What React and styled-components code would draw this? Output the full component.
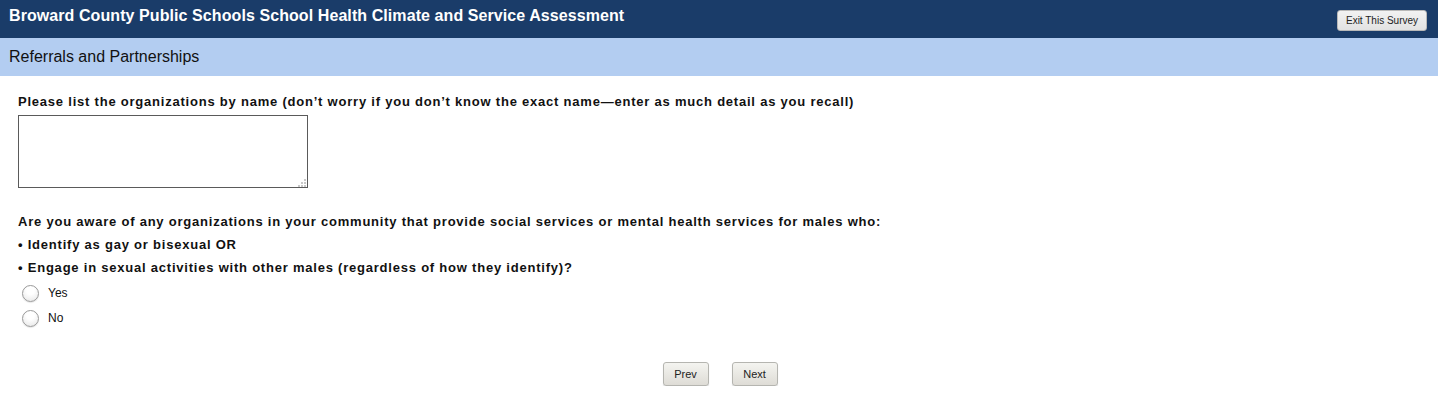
import React from 'react'
import styled, { createGlobalStyle } from 'styled-components'

const Global = createGlobalStyle`
  body {
    margin: 0;
    background: #fff;
    font-family: "Liberation Sans", Arial, sans-serif;
  }
`;

const App = () => {
  return (
    <Page>
      <Global />
      <Header>
        <Title>Broward County Public Schools School Health Climate and Service Assessment</Title>
        <ExitButton>Exit This Survey</ExitButton>
      </Header>
      <SubHeader>Referrals and Partnerships</SubHeader>
      <Body>
        <Question>
          <QText>Please list the organizations by name (don’t worry if you don’t know the exact name—enter as much detail as you recall)</QText>
          <BoxWrap>
            <TextBox />
            <Grip>
              <svg width="9" height="9" viewBox="0 0 9 9">
                <rect x="7" y="1" width="2" height="2" fill="#c9c9c9" />
                <rect x="4" y="4" width="2" height="2" fill="#c9c9c9" />
                <rect x="7" y="4" width="2" height="2" fill="#c9c9c9" />
                <rect x="1" y="7" width="2" height="2" fill="#c9c9c9" />
                <rect x="4" y="7" width="2" height="2" fill="#c9c9c9" />
                <rect x="7" y="7" width="2" height="2" fill="#c9c9c9" />
              </svg>
            </Grip>
          </BoxWrap>
        </Question>
        <Question>
          <QText>
            Are you aware of any organizations in your community that provide social services or mental health services for males who:<br />
            • Identify as gay or bisexual OR<br />
            • Engage in sexual activities with other males (regardless of how they identify)?
          </QText>
          <Options>
            <Option>
              <Radio />
              Yes
            </Option>
            <Option>
              <Radio />
              No
            </Option>
          </Options>
        </Question>
        <Footer>
          <NavButton>Prev</NavButton>
          <NavButton>Next</NavButton>
        </Footer>
      </Body>
    </Page>
  )
}

export default App

const Page = styled.div`
  width: 100%;
`;

const Header = styled.div`
  height: 38px;
  background: #1a3c69;
  display: flex;
  align-items: center;
  justify-content: space-between;
  padding: 0 11px 0 9px;
  box-sizing: border-box;
`;

const Title = styled.div`
  color: #fff;
  font-size: 16px;
  font-weight: 700;
  letter-spacing: 0.08px;
  margin-top: -6px;
`;

const ExitButton = styled.button`
  width: 90px;
  height: 21px;
  margin-top: 2px;
  padding: 0;
  font-family: "Liberation Sans", Arial, sans-serif;
  font-size: 10px;
  color: #222;
  background: linear-gradient(#f2f2f2, #e2e2e2);
  border: 1px solid #b8b8b8;
  border-radius: 3px;
`;

const SubHeader = styled.div`
  height: 38px;
  background: #b3cdf1;
  color: #111;
  font-size: 16px;
  display: flex;
  align-items: center;
  padding-left: 9px;
`;

const Body = styled.div`
  padding: 14px 18px 0;
`;

const Question = styled.div`
  margin-bottom: 22px;
`;

const QText = styled.div`
  font-size: 13px;
  font-weight: 700;
  line-height: 23px;
  letter-spacing: 0.78px;
  color: #111;
`;

const BoxWrap = styled.div`
  position: relative;
  width: 290px;
  margin-top: 2px;
`;

const TextBox = styled.textarea`
  display: block;
  width: 290px;
  height: 73px;
  box-sizing: border-box;
  border: 1px solid #5a5a5a;
  resize: none;
`;

const Grip = styled.div`
  position: absolute;
  right: 2px;
  bottom: 1px;
  line-height: 0;
`;

const Options = styled.div`
  display: flex;
  flex-direction: column;
  gap: 7px;
  margin-top: 5px;
  padding-left: 4px;
`;

const Option = styled.label`
  display: flex;
  align-items: center;
  gap: 9px;
  font-size: 12px;
  color: #111;
  height: 18px;
`;

const Radio = styled.span`
  width: 15px;
  height: 15px;
  border-radius: 50%;
  border: 1px solid #9a9a9a;
  background: radial-gradient(circle at 50% 30%, #ffffff 30%, #e4e4e4 100%);
  box-shadow: 0 1px 1px rgba(0, 0, 0, 0.1);
`;

const Footer = styled.div`
  display: flex;
  justify-content: center;
  gap: 23px;
  margin-top: 35px;
  padding-left: 2px;
`;

const NavButton = styled.button`
  width: 46px;
  height: 24px;
  padding: 0;
  font-family: "Liberation Sans", Arial, sans-serif;
  font-size: 11px;
  color: #222;
  background: linear-gradient(#f4f4f0, #dedcd6);
  border: 1px solid #b5b5b0;
  border-radius: 3px;
  box-shadow: 0 1px 1px rgba(0, 0, 0, 0.15);
`;
